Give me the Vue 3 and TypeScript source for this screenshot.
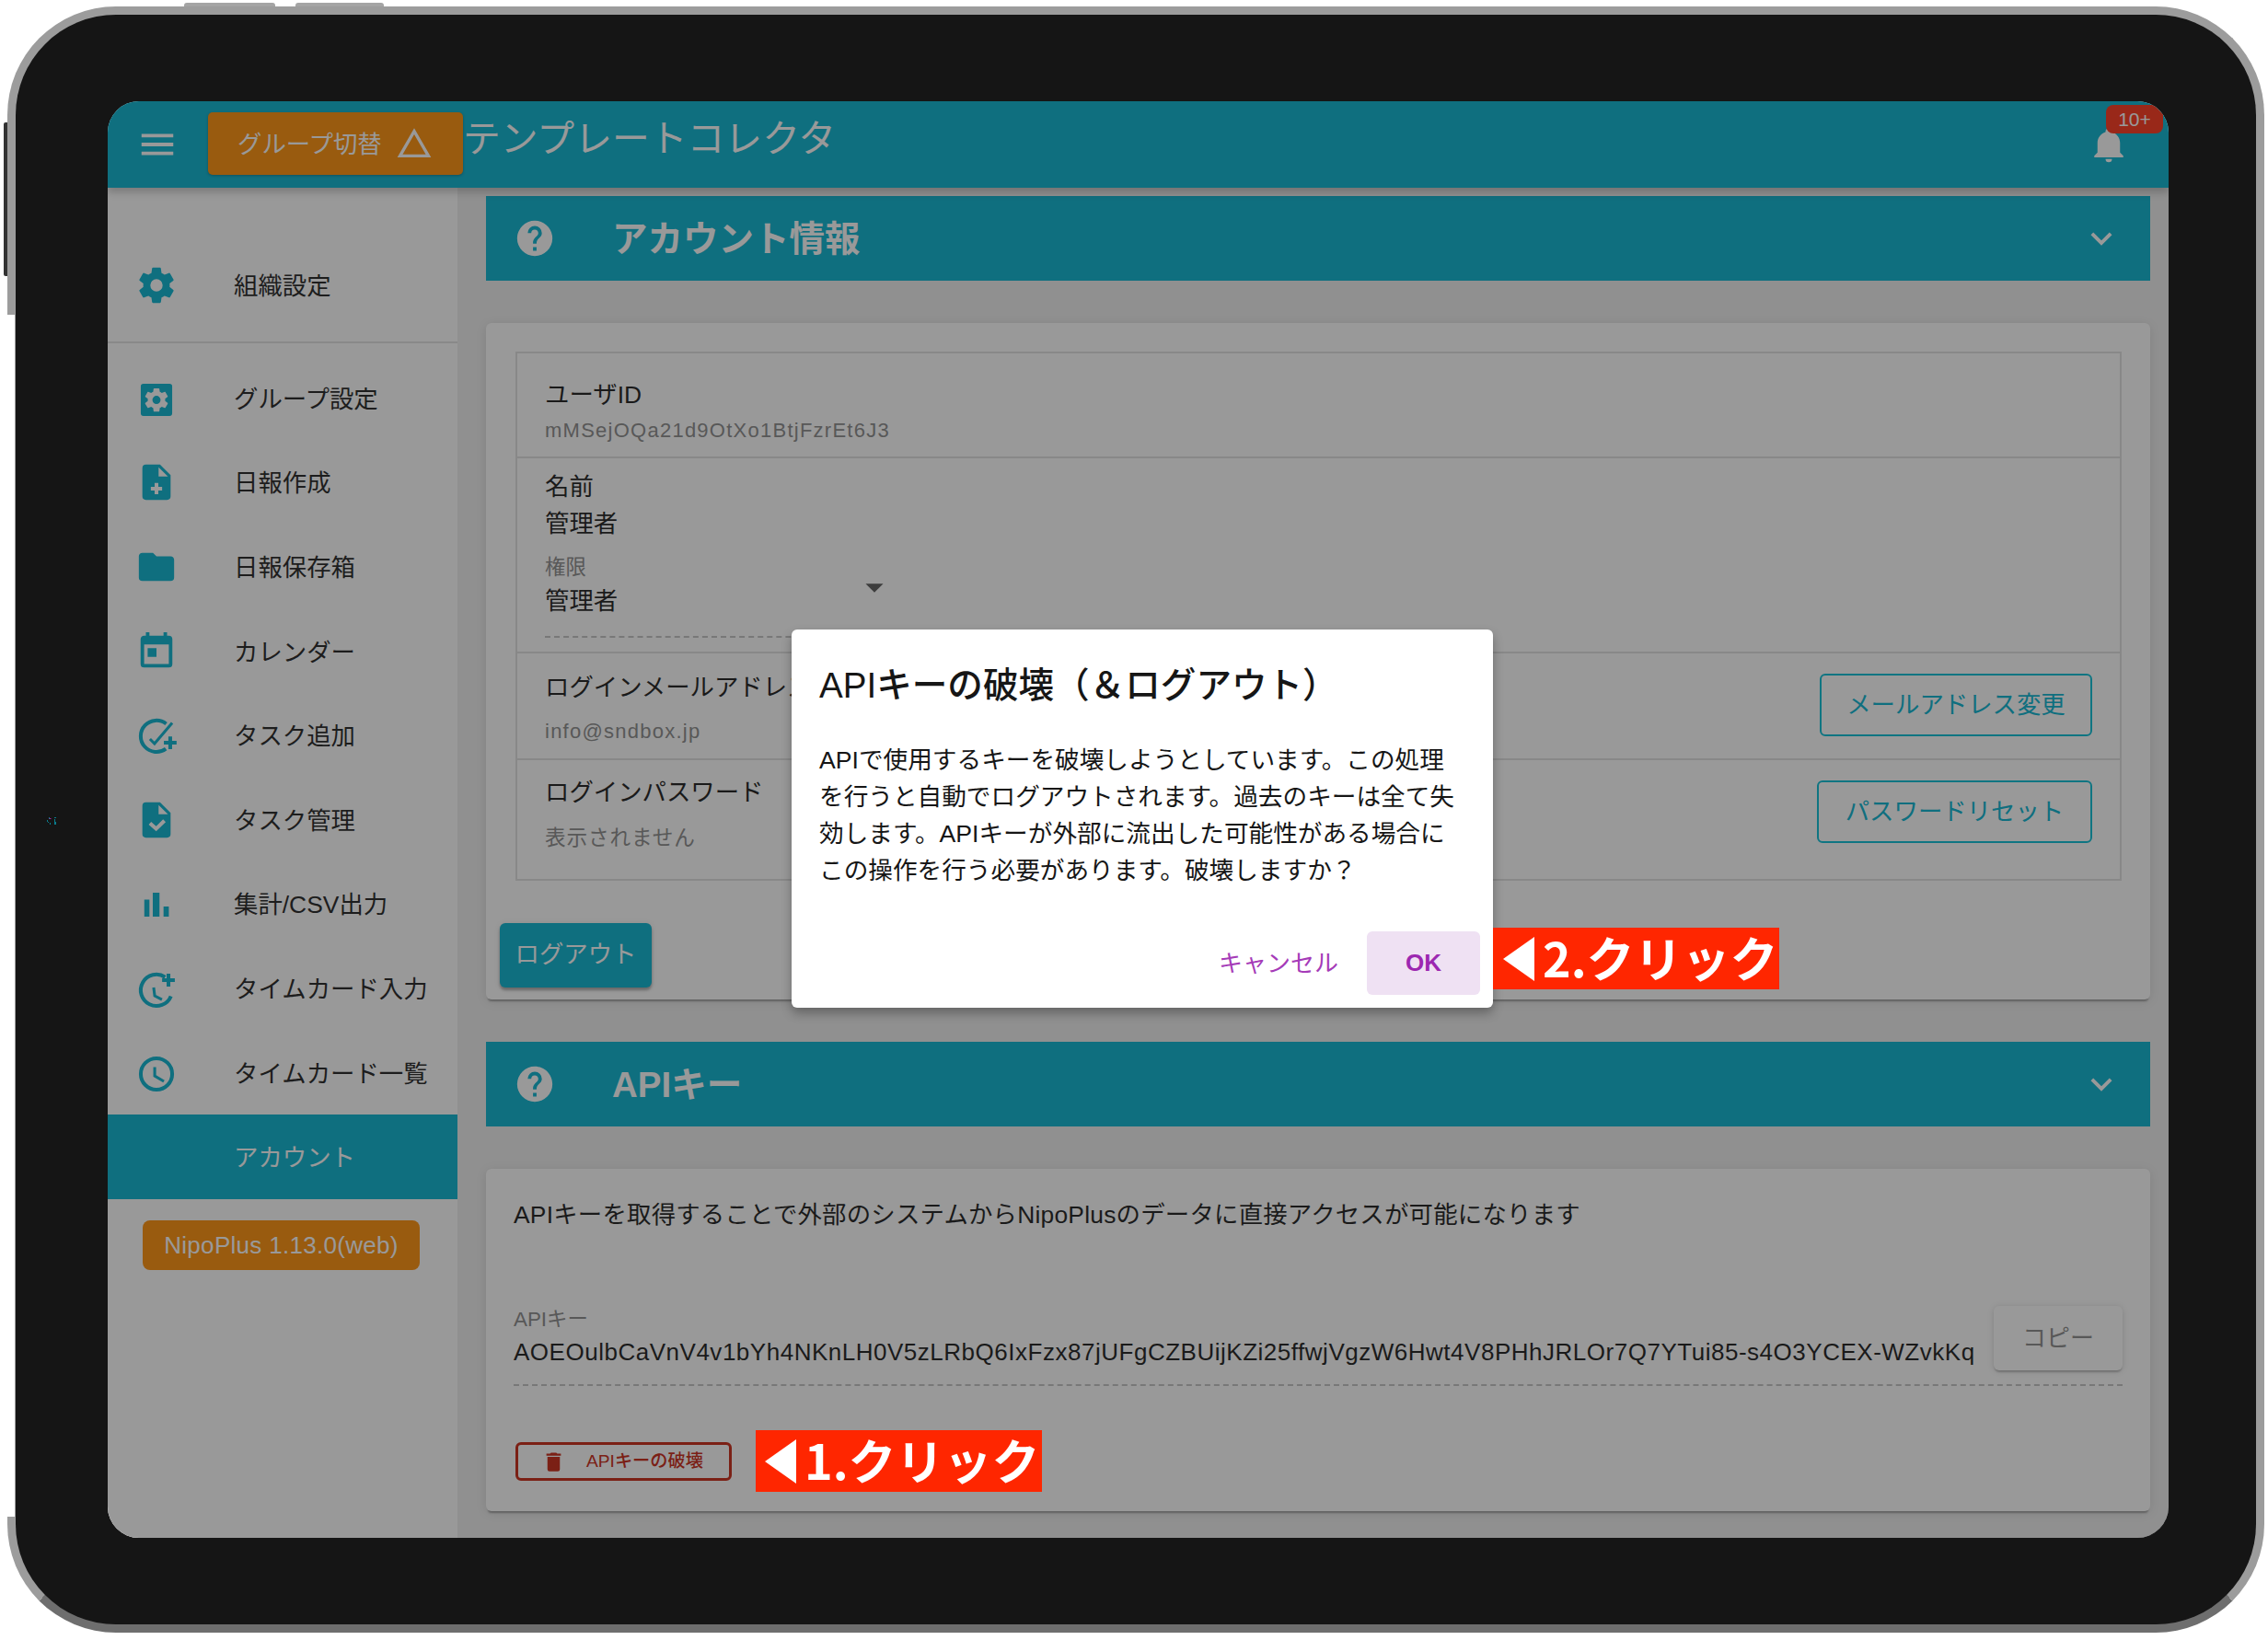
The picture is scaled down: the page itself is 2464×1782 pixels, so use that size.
<template>
  <div class="page">
    <i class="hw hw--top1"></i>
    <i class="hw hw--top2"></i>
    <i class="hw hw--side"></i>
    <div class="device">
      <i class="edge-mask"></i>
      <svg class="camera" viewBox="0 0 12 10" width="12" height="10">
        <path d="M3 1h1v2H3zM1 4h1v2H1zM2 6h1v1H2zM4 7h1v2H4z" fill="#0a7c8c" />
        <path d="M9 1h2v1H9zM9 3h1v6H9zM10 6h1v3h-1z" fill="#0a7c8c" />
        <path d="M3.500 2h2v1h-2z" fill="#a02aa8" />
      </svg>
      <div class="screen">
        <header class="topbar">
          <svg class="mdi topbar__menu" viewBox="0 0 24 24"><path :d="icons.menu" /></svg>
          <button class="group-btn">
            <span>グループ切替</span>
            <svg class="group-btn__icon" viewBox="0 0 24 24"><path :d="icons.triangle" fill-rule="evenodd" /></svg>
          </button>
          <h1 class="topbar__title">テンプレートコレクタ</h1>
          <div class="bell">
            <svg viewBox="0 0 24 24" width="42" height="42"><path :d="icons.bell" /></svg>
            <span class="bell__badge">10+</span>
          </div>
        </header>

        <div class="body">
          <nav class="side">
            <a class="side__item side__item--first">
              <svg class="mdi" viewBox="0 0 24 24"><path :d="icons.cog" /></svg>
              <span>組織設定</span>
            </a>
            <hr class="side__rule" />
            <a
              v-for="item in navItems"
              :key="item.label"
              class="side__item"
              :class="{ 'side__item--on': item.active }"
            >
              <svg v-if="item.d || item.line" class="mdi" viewBox="0 0 24 24">
                <path v-if="item.d" :d="item.d" fill-rule="evenodd" />
                <path
                  v-if="item.gear"
                  :d="icons.cog"
                  fill="#fff"
                  transform="translate(12 12.8) scale(.66) translate(-12 -12)"
                />
                <path v-if="item.line" :d="item.line" class="line" />
                <path v-if="item.thin" :d="item.thin" class="line line--thin" />
                <path v-if="item.cut" :d="item.cut" class="line line--cut" />
              </svg>
              <span v-else class="side__gap"></span>
              <span>{{ item.label }}</span>
            </a>
            <div class="version">NipoPlus 1.13.0(web)</div>
          </nav>

          <main class="main">
            <section class="bar">
              <svg class="mdi bar__help" viewBox="0 0 24 24"><path :d="icons.help" /></svg>
              <h2 class="bar__title">アカウント情報</h2>
              <svg class="mdi bar__chev" viewBox="0 0 24 24"><path :d="icons.chevron" /></svg>
            </section>

            <section class="card card--account">
              <div class="table">
                <div class="row row--id">
                  <div>
                    <div class="label">ユーザID</div>
                    <div class="value">mMSejOQa21d9OtXo1BtjFzrEt6J3</div>
                  </div>
                </div>
                <div class="row row--name">
                  <div>
                    <div class="label">名前</div>
                    <div class="label">管理者</div>
                    <div class="select">
                      <div class="small">権限</div>
                      <div class="label">管理者</div>
                      <svg class="select__caret" viewBox="0 0 24 24"><path :d="icons.caret" /></svg>
                    </div>
                  </div>
                </div>
                <div class="row row--login">
                  <div>
                    <div class="label">ログインメールアドレス</div>
                    <div class="value value--mail">info@sndbox.jp</div>
                  </div>
                  <button class="outline">メールアドレス変更</button>
                </div>
                <div class="row row--login row--pass">
                  <div>
                    <div class="label">ログインパスワード</div>
                    <div class="value value--hidden">表示されません</div>
                  </div>
                  <button class="outline">パスワードリセット</button>
                </div>
              </div>
              <button class="logout">ログアウト</button>
            </section>

            <section class="bar">
              <svg class="mdi bar__help" viewBox="0 0 24 24"><path :d="icons.help" /></svg>
              <h2 class="bar__title">APIキー</h2>
              <svg class="mdi bar__chev" viewBox="0 0 24 24"><path :d="icons.chevron" /></svg>
            </section>

            <section class="card card--api">
              <p class="api-note">APIキーを取得することで外部のシステムからNipoPlusのデータに直接アクセスが可能になります</p>
              <div class="api-field">
                <div class="api-field__text">
                  <div class="small">APIキー</div>
                  <div class="api-field__value">{{ apiKey }}</div>
                </div>
                <button class="copy">コピー</button>
              </div>
              <button class="destroy">
                <svg viewBox="0 0 24 24" width="27" height="27"><path :d="icons.trash" /></svg>
                <span>APIキーの破壊</span>
              </button>
            </section>
          </main>
        </div>

        <div class="scrim"></div>

        <div class="dialog">
          <h3 class="dialog__title">APIキーの破壊（＆ログアウト）</h3>
          <p class="dialog__text">
            APIで使用するキーを破壊しようとしています。この処理<br />
            を行うと自動でログアウトされます。過去のキーは全て失<br />
            効します。APIキーが外部に流出した可能性がある場合に<br />
            この操作を行う必要があります。破壊しますか？
          </p>
          <div class="dialog__actions">
            <button class="dialog__cancel">キャンセル</button>
            <button class="dialog__ok">OK</button>
          </div>
        </div>

        <div class="note note--two">
          <svg viewBox="0 0 34 48" width="34" height="48"><path d="M34 0V48L0 24Z" fill="#fff" /></svg>
          <span>2.クリック</span>
        </div>
        <div class="note note--one">
          <svg viewBox="0 0 34 48" width="34" height="48"><path d="M34 0V48L0 24Z" fill="#fff" /></svg>
          <span>1.クリック</span>
        </div>
      </div>
    </div>
  </div>
</template>

<script setup lang="ts">
interface NavItem {
  label: string;
  d?: string;
  gear?: boolean;
  line?: string;
  thin?: string;
  cut?: string;
  active?: boolean;
}

const icons = {
  menu: 'M3,6H21V8H3V6M3,11H21V13H3V11M3,16H21V18H3V16Z',
  triangle: 'M12,2L1,21H23L12,2ZM12,6L19.53,19H4.47L12,6Z',
  bell: 'M21,19V20H3V19L5,17V11C5,7.9 7.03,5.17 10,4.29C10,4.19 10,4.1 10,4A2,2 0 0,1 12,2A2,2 0 0,1 14,4C14,4.1 14,4.19 14,4.29C16.97,5.17 19,7.9 19,11V17L21,19M14,21A2,2 0 0,1 12,23A2,2 0 0,1 10,21',
  cog: 'M12,15.5A3.5,3.5 0 0,1 8.5,12A3.5,3.5 0 0,1 12,8.5A3.5,3.5 0 0,1 15.5,12A3.5,3.5 0 0,1 12,15.5M19.43,12.97C19.47,12.65 19.5,12.33 19.5,12C19.5,11.67 19.47,11.34 19.43,11L21.54,9.37C21.73,9.22 21.78,8.95 21.66,8.73L19.66,5.27C19.54,5.05 19.27,4.96 19.05,5.05L16.56,6.05C16.04,5.66 15.5,5.32 14.87,5.07L14.5,2.42C14.46,2.18 14.25,2 14,2H10C9.75,2 9.54,2.18 9.5,2.42L9.13,5.07C8.5,5.32 7.96,5.66 7.44,6.05L4.95,5.05C4.73,4.96 4.46,5.05 4.34,5.27L2.34,8.73C2.21,8.95 2.27,9.22 2.46,9.37L4.57,11C4.53,11.34 4.5,11.67 4.5,12C4.5,12.33 4.53,12.65 4.57,12.97L2.46,14.63C2.27,14.78 2.21,15.05 2.34,15.27L4.34,18.73C4.46,18.95 4.73,19.03 4.95,18.95L7.44,17.94C7.96,18.34 8.5,18.68 9.13,18.93L9.5,21.58C9.54,21.82 9.75,22 10,22H14C14.25,22 14.46,21.82 14.5,21.58L14.87,18.93C15.5,18.67 16.04,18.34 16.56,17.94L19.05,18.95C19.27,19.03 19.54,18.95 19.66,18.73L21.66,15.27C21.78,15.05 21.73,14.78 21.54,14.63L19.43,12.97Z',
  help: 'M15.07,11.25L14.17,12.17C13.45,12.89 13,13.5 13,15H11V14.5C11,13.39 11.45,12.39 12.17,11.67L13.41,10.41C13.78,10.05 14,9.55 14,9C14,7.89 13.1,7 12,7A2,2 0 0,0 10,9H8A4,4 0 0,1 12,5A4,4 0 0,1 16,9C16,9.88 15.64,10.67 15.07,11.25M13,19H11V17H13M12,2A10,10 0 0,0 2,12A10,10 0 0,0 12,22A10,10 0 0,0 22,12C22,6.47 17.5,2 12,2Z',
  chevron: 'M7.41,8.58L12,13.17L16.59,8.58L18,10L12,16L6,10L7.41,8.58Z',
  caret: 'M7,10L12,15L17,10H7Z',
  trash: 'M19,4H15.5L14.5,3H9.5L8.5,4H5V6H19M6,19A2,2 0 0,0 8,21H16A2,2 0 0,0 18,19V7H6V19Z',
};

const doc = 'M6 2H14L20 8V20A2 2 0 0 1 18 22H6A2 2 0 0 1 4 20V4A2 2 0 0 1 6 2ZM13.2 3.500V8.800H18.500Z';

const navItems: NavItem[] = [
  { label: 'グループ設定', d: 'M4.600 3.600H19.400A1.500 1.500 0 0 1 20.900 5.100V20.400A1.500 1.500 0 0 1 19.400 21.900H4.600A1.500 1.500 0 0 1 3.100 20.400V5.100A1.500 1.500 0 0 1 4.600 3.600Z', gear: true },
  { label: '日報作成', d: doc, cut: 'M12 12.400v6.400M8.800 15.600h6.400' },
  { label: '日報保存箱', d: 'M10,4H4C2.89,4 2,4.89 2,6V18A2,2 0 0,0 4,20H20A2,2 0 0,0 22,18V8C22,6.89 21.1,6 20,6H12L10,4Z' },
  { label: 'カレンダー', d: 'M19 19H5V8h14v11ZM16 1v2H8V1H6v2H5C3.89 3 3 3.89 3 5v14a2 2 0 0 0 2 2h14a2 2 0 0 0 2-2V5a2 2 0 0 0-2-2h-1V1h-2ZM7 10h5v5H7z' },
  { label: 'タスク追加', line: 'M17.500 5.500A8.900 8.900 0 1 0 17.300 19.600M19.800 12.600v7.200M16.200 16.200h7.200', thin: 'M8.300 14.100L10.900 16.700L20.900 5' },
  { label: 'タスク管理', d: doc, cut: 'M8.300 13.800L11.800 17L16.500 12.400' },
  { label: '集計/CSV出力', d: 'M5.100 9.600H8V19.300H5.100ZM9.900 5.700H13.700V19.300H9.900ZM16 13.600H19V19.300H16Z' },
  { label: 'タイムカード入力', line: 'M16.900 5.600A8.900 8.900 0 1 0 20.200 16.400M18.800 3.700v7.200M15.200 7.300h7.200', thin: 'M10.400 11.500L11 16.200L15.100 18.300' },
  { label: 'タイムカード一覧', line: 'M20.900 12.500A8.900 8.900 0 1 1 3.100 12.500A8.900 8.900 0 1 1 20.900 12.500Z', thin: 'M11 8.600V13.600L16.200 16.700' },
  { label: 'アカウント', active: true },
];

const apiKey = 'AOEOulbCaVnV4v1bYh4NKnLH0V5zLRbQ6IxFzx87jUFgCZBUijKZi25ffwjVgzW6Hwt4V8PHhJRLOr7Q7YTui85-s4O3YCEX-WZvkKq';
</script>

<style>
html,
body {
  margin: 0;
  background: #fff;
}
</style>

<style scoped>
.page {
  position: relative;
  width: 2464px;
  height: 1782px;
  overflow: hidden;
  background: #fff;
  font-family: "Liberation Sans", "Noto Sans CJK JP", sans-serif;
}

.hw {
  position: absolute;
  background: #a4a4a4;
}
.hw--top1 { left: 200px; top: 3px; width: 99px; height: 8px; border-radius: 3px 3px 0 0; }
.hw--top2 { left: 321px; top: 3px; width: 96px; height: 8px; border-radius: 3px 3px 0 0; }
.hw--side { left: 4px; top: 133px; width: 8px; height: 167px; background: #333; border-radius: 2px 0 0 2px; }

.device {
  position: absolute;
  left: 8px;
  top: 7px;
  width: 2452px;
  height: 1767px;
  box-sizing: border-box;
  padding: 94px 95px 94px 100px;
  background: #151515;
  border: 9px solid #9c9c9c;
  border-bottom-color: #6e6e6e;
  border-radius: 118px;
}

.edge-mask {
  position: absolute;
  left: -9px;
  top: 326px;
  width: 8px;
  height: 1306px;
  background: #fff;
}

.camera {
  position: absolute;
  left: 33px;
  top: 871px;
}

.screen {
  position: relative;
  height: 100%;
  border-radius: 34px;
  overflow: hidden;
  display: flex;
  flex-direction: column;
  background: #eee;
  color: #161616;
}

/* top bar */
.topbar {
  position: relative;
  z-index: 2;
  flex: none;
  display: flex;
  align-items: center;
  height: 94px;
  padding: 0 45px 0 31px;
  background: #00b1cf;
  color: #fff;
  fill: #fff;
  box-shadow: 0 5px 8px rgba(0, 0, 0, 0.22);
}
.mdi {
  flex: none;
  width: 46px;
  height: 46px;
}
.topbar__menu {
  margin-right: 32px;
}
.group-btn {
  flex: none;
  display: flex;
  align-items: center;
  width: 277px;
  height: 68px;
  margin-top: -2px;
  padding: 0 0 0 32px;
  box-sizing: border-box;
  border: 0;
  border-radius: 5px;
  background: #ff8c00;
  color: #fff;
  font: inherit;
  font-size: 26.4px;
  box-shadow: 0 1px 3px rgba(0, 0, 0, 0.3);
}
.group-btn span {
  padding-bottom: 4px;
}
.group-btn__icon {
  width: 40px;
  height: 40px;
  margin-left: 15px;
  fill: #fff;
}
.topbar__title {
  margin: -12px 0 0;
  font-size: 40.8px;
  font-weight: 400;
  line-height: 60px;
}
.bell {
  position: relative;
  margin-left: auto;
  width: 40px;
  height: 42px;
}
.bell svg {
  display: block;
  margin: 0 -1px;
}
.bell__badge {
  position: absolute;
  left: 17px;
  top: -22px;
  width: 62px;
  height: 31px;
  border-radius: 8px;
  background: #ff2f14;
  color: #fff;
  font-size: 21px;
  line-height: 31px;
  text-align: center;
}

.body {
  flex: 1;
  min-height: 0;
  display: flex;
}

/* sidebar */
.side {
  flex: none;
  width: 380px;
  box-sizing: border-box;
  padding-top: 60px;
  background: #fff;
}
.side__item {
  display: flex;
  align-items: center;
  height: 91.6px;
  padding-left: 30px;
  font-size: 26.4px;
  fill: #00b1cf;
  color: #1a1a1a;
}
.side__item > span:last-child {
  margin-left: 61px;
  padding-bottom: 3px;
}
.side__item--first {
  height: 92px;
}
.side__item--on {
  background: #00b1cf;
  color: #fff;
}
.side__gap {
  flex: none;
  width: 46px;
}
.side__rule {
  margin: 15px 0 14px;
  border: 0;
  height: 2px;
  background: #e2e2e2;
}
.line {
  fill: none;
  stroke: #00b1cf;
  stroke-width: 2.1;
}
.line--thin {
  stroke-width: 1.6;
}
.line--cut {
  stroke: #fff;
  stroke-width: 2.1;
}
.version {
  width: 301px;
  height: 54px;
  margin: 23px 0 0 38px;
  border-radius: 8px;
  background: #ff8c00;
  color: #fff;
  font-size: 26px;
  letter-spacing: 0.3px;
  line-height: 54px;
  text-align: center;
}

/* main column */
.main {
  flex: 1;
  min-width: 0;
  padding: 9px 20px 0 31px;
}
.bar {
  display: flex;
  align-items: center;
  height: 92px;
  padding: 0 30px;
  background: #00b1cf;
  fill: #fff;
  color: #fff;
}
.bar__title {
  margin: 0 0 6px 61px;
  font-size: 38.5px;
  font-weight: 700;
}
.bar__chev {
  margin-left: auto;
}

.card {
  margin: 46px 0;
  background: #fff;
  border-radius: 6px;
  box-shadow: 0 4px 2px -2px rgba(0, 0, 0, 0.32), 0 2px 12px rgba(0, 0, 0, 0.1);
}
.card--account {
  padding: 31px 31px 14px 15px;
  height: 735px;
  box-sizing: border-box;
}
.table {
  margin-left: 17px;
  border: 2px solid #e0e0e0;
}
.row {
  display: flex;
  padding: 0 30px;
  border-top: 2px solid #e0e0e0;
}
.row:first-child {
  border-top: 0;
}
.row--id {
  height: 112px;
  padding-top: 25px;
  box-sizing: border-box;
}
.row--id .value {
  margin-top: 4px;
}
.row--name {
  height: 212px;
  padding-top: 11px;
  box-sizing: border-box;
}
.row--login {
  height: 116px;
  padding-top: 17px;
  box-sizing: border-box;
}
.row--pass {
  height: 131px;
  padding-top: 15px;
}
.label {
  font-size: 26.4px;
  line-height: 40px;
  white-space: nowrap;
}
.value {
  margin-top: 3px;
  color: #888;
  font-size: 22px;
  letter-spacing: 1.25px;
  line-height: 30px;
}
.value--mail {
  margin-top: 13px;
}
.value--hidden {
  font-size: 22.6px;
  letter-spacing: 0.9px;
  margin-top: 15px;
}
.small {
  color: #888;
  font-size: 22.4px;
  line-height: 26px;
}
.select {
  position: relative;
  width: 378px;
  margin-top: 15px;
  padding-bottom: 18px;
  border-bottom: 2px dashed #c2c2c2;
}
.select .label {
  margin-top: 3px;
}
.select__caret {
  position: absolute;
  right: -3px;
  top: 11px;
  width: 46px;
  height: 46px;
  fill: #555;
}
.outline {
  flex: none;
  margin-left: auto;
  height: 68px;
  box-sizing: border-box;
  padding: 0 0 5px;
  border: 2px solid #00bcd4;
  border-radius: 6px;
  background: transparent;
  color: #00b1cf;
  font: inherit;
  font-size: 26.4px;
}
.row--login .outline { width: 296px; margin-top: 5px; }
.row--pass .outline { width: 299px; margin-top: 7px; }
.logout {
  display: block;
  width: 165px;
  height: 70px;
  margin-top: 46px;
  padding: 0 0 7px;
  border: 0;
  border-radius: 6px;
  background: #00b1cf;
  color: #fff;
  font: inherit;
  font-size: 26.4px;
  box-shadow: 0 3px 3px rgba(0, 0, 0, 0.3), 0 1px 6px rgba(0, 0, 0, 0.12);
}

.card--api {
  padding: 30px 30px 33px 30px;
  margin-bottom: 0;
}
.api-note {
  margin: 0;
  font-size: 26.4px;
  letter-spacing: 0.22px;
  line-height: 40px;
}
.api-field {
  position: relative;
  margin-top: 81px;
  padding-bottom: 15px;
  border-bottom: 2px dashed #c2c2c2;
}
.api-field__value {
  margin-top: 2px;
  font-size: 26px;
  letter-spacing: 0.515px;
  line-height: 40px;
  white-space: nowrap;
}
.copy {
  position: absolute;
  right: 0;
  top: -2px;
  width: 140px;
  height: 70px;
  padding: 0 0 5px;
  border: 0;
  border-radius: 6px;
  background: #fff;
  color: #888;
  font: inherit;
  font-size: 26px;
  box-shadow: 0 3px 2px -1px rgba(0, 0, 0, 0.22), 0 1px 7px rgba(0, 0, 0, 0.16);
}
.destroy {
  display: flex;
  align-items: center;
  width: 235px;
  height: 42px;
  margin: 61px 0 0 2px;
  padding: 0 0 0 25px;
  box-sizing: border-box;
  border: 3px solid #c8200c;
  border-radius: 6px;
  background: transparent;
  color: #c8200c;
  fill: #c8200c;
  font: inherit;
  font-size: 19.2px;
  font-weight: 500;
}
.destroy span {
  margin-left: 22px;
  padding-bottom: 5px;
}

/* dialog layer */
.scrim {
  position: absolute;
  inset: 0;
  z-index: 5;
  background: rgba(33, 33, 33, 0.46);
}
.dialog {
  position: absolute;
  z-index: 6;
  left: 743px;
  top: 574px;
  width: 762px;
  height: 411px;
  box-sizing: border-box;
  padding: 36px 14px 14px 30px;
  border-radius: 6px;
  background: #fff;
  color: #161616;
  box-shadow: 0 6px 12px rgba(0, 0, 0, 0.3);
}
.dialog__title {
  margin: 0;
  font-size: 38.6px;
  font-weight: 500;
  line-height: 50px;
  white-space: nowrap;
}
.dialog__text {
  margin: 36px 0 0;
  font-size: 26.65px;
  line-height: 40px;
  white-space: nowrap;
}
.dialog__actions {
  display: flex;
  justify-content: flex-end;
  align-items: center;
  margin-top: 46px;
}
.dialog__cancel,
.dialog__ok {
  border: 0;
  border-radius: 6px;
  background: transparent;
  color: #a53bb8;
  font: inherit;
  font-size: 26px;
}
.dialog__cancel {
  margin-right: 31px;
  padding: 0 0 5px;
}
.dialog__ok {
  width: 123px;
  height: 69px;
  background: #efe1f3;
  color: #9c27b0;
  font-weight: 700;
}

.note {
  position: absolute;
  z-index: 7;
  display: flex;
  align-items: center;
  width: 311px;
  height: 67px;
  box-sizing: border-box;
  padding-left: 11px;
  background: #ff2600;
  color: #fff;
  font-family: "Noto Sans CJK JP", sans-serif;
  font-size: 52px;
  font-weight: 700;
  line-height: 67px;
  white-space: nowrap;
}
.note span {
  margin-left: 9px;
  padding-bottom: 5px;
}
.note--two {
  left: 1505px;
  top: 898px;
}
.note--one {
  left: 704px;
  top: 1444px;
  padding-left: 10px;
}
</style>
